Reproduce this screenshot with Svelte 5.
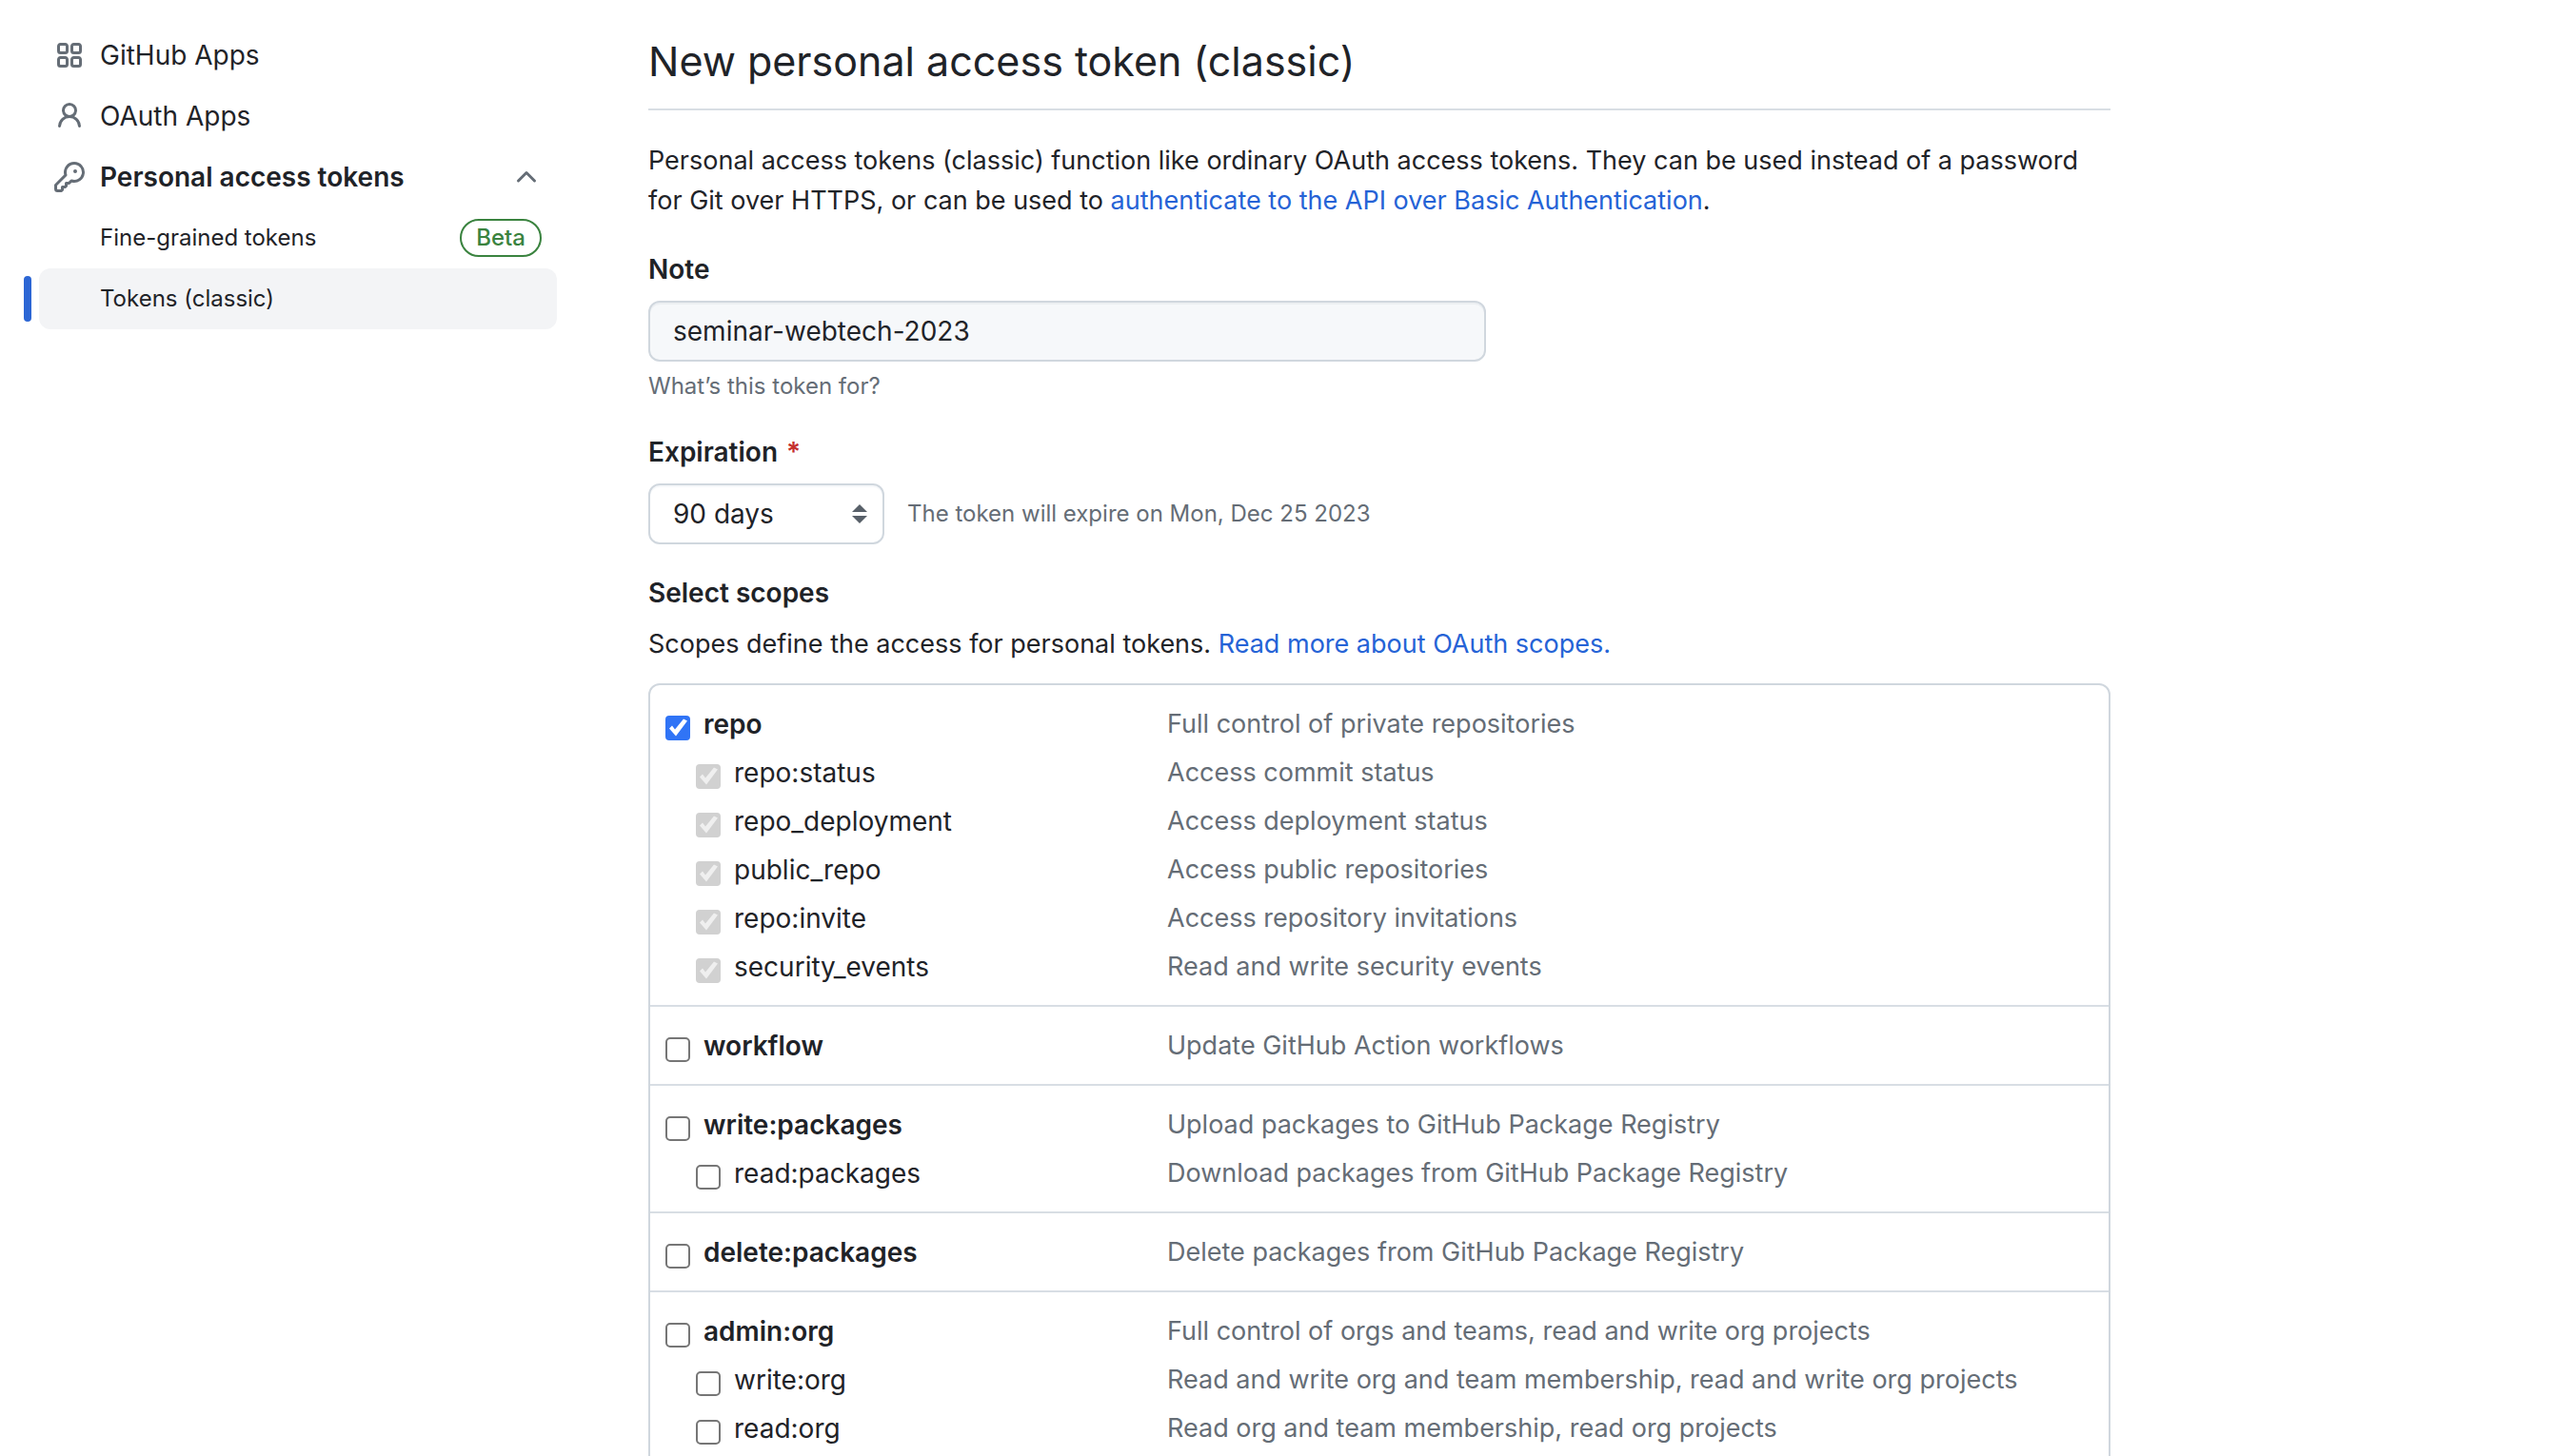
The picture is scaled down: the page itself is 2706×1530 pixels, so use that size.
<script>
  let note = $state('seminar-webtech-2023');
  let expiration = $state('90');

  const groups = $state([
    {
      name: 'repo', text: 'Full control of private repositories', checked: true,
      children: [
        { name: 'repo:status', text: 'Access commit status' },
        { name: 'repo_deployment', text: 'Access deployment status' },
        { name: 'public_repo', text: 'Access public repositories' },
        { name: 'repo:invite', text: 'Access repository invitations' },
        { name: 'security_events', text: 'Read and write security events' }
      ]
    },
    { name: 'workflow', text: 'Update GitHub Action workflows', checked: false, children: [] },
    {
      name: 'write:packages', text: 'Upload packages to GitHub Package Registry', checked: false,
      children: [{ name: 'read:packages', text: 'Download packages from GitHub Package Registry' }]
    },
    { name: 'delete:packages', text: 'Delete packages from GitHub Package Registry', checked: false, children: [] },
    {
      name: 'admin:org', text: 'Full control of orgs and teams, read and write org projects', checked: false,
      children: [
        { name: 'write:org', text: 'Read and write org and team membership, read and write org projects' },
        { name: 'read:org', text: 'Read org and team membership, read org projects' }
      ]
    }
  ]);
</script>

<div class="page">
  <nav class="sidebar" aria-label="Developer settings">
    <a class="item" href="#apps">
      <svg class="icon" viewBox="0 0 16 16" aria-hidden="true"><path d="M1.5 3.25c0-.966.784-1.75 1.75-1.75h2.5c.966 0 1.75.784 1.75 1.75v2.5A1.75 1.75 0 0 1 5.75 7.5h-2.5A1.75 1.75 0 0 1 1.5 5.75Zm7 0c0-.966.784-1.75 1.75-1.75h2.5c.966 0 1.75.784 1.75 1.75v2.5a1.75 1.75 0 0 1-1.75 1.75h-2.5A1.75 1.75 0 0 1 8.5 5.75Zm-7 7c0-.966.784-1.75 1.75-1.75h2.5c.966 0 1.75.784 1.75 1.75v2.5a1.75 1.75 0 0 1-1.75 1.75h-2.5a1.75 1.75 0 0 1-1.75-1.75Zm7 0c0-.966.784-1.75 1.75-1.75h2.5c.966 0 1.75.784 1.75 1.75v2.5a1.75 1.75 0 0 1-1.75 1.75h-2.5a1.75 1.75 0 0 1-1.75-1.75ZM3.25 3a.25.25 0 0 0-.25.25v2.5c0 .138.112.25.25.25h2.5A.25.25 0 0 0 6 5.75v-2.5A.25.25 0 0 0 5.75 3Zm7 0a.25.25 0 0 0-.25.25v2.5c0 .138.112.25.25.25h2.5a.25.25 0 0 0 .25-.25v-2.5a.25.25 0 0 0-.25-.25Zm-7 7a.25.25 0 0 0-.25.25v2.5c0 .138.112.25.25.25h2.5a.25.25 0 0 0 .25-.25v-2.5a.25.25 0 0 0-.25-.25Zm7 0a.25.25 0 0 0-.25.25v2.5c0 .138.112.25.25.25h2.5a.25.25 0 0 0 .25-.25v-2.5a.25.25 0 0 0-.25-.25Z" /></svg>
      <span>GitHub Apps</span>
    </a>
    <a class="item" href="#oauth">
      <svg class="icon" viewBox="0 0 16 16" aria-hidden="true"><path d="M10.561 8.073a6.005 6.005 0 0 1 3.432 5.142.75.75 0 1 1-1.498.07 4.5 4.5 0 0 0-8.99 0 .75.75 0 0 1-1.498-.07 6.004 6.004 0 0 1 3.431-5.142 3.999 3.999 0 1 1 5.123 0ZM10.5 5a2.5 2.5 0 1 0-5 0 2.5 2.5 0 0 0 5 0Z" /></svg>
      <span>OAuth Apps</span>
    </a>
    <button class="item strong" type="button" aria-expanded="true">
      <svg class="icon" viewBox="0 0 16 16" aria-hidden="true"><path d="M10.5 0a5.499 5.499 0 1 1-1.288 10.848l-.932.932a.749.749 0 0 1-.53.22H7v.75a.749.749 0 0 1-.22.53l-.5.5a.749.749 0 0 1-.53.22H5v.75a.749.749 0 0 1-.22.53l-.5.5a.749.749 0 0 1-.53.22h-2A1.75 1.75 0 0 1 0 14.25v-2c0-.199.079-.389.22-.53l4.932-4.932A5.5 5.5 0 0 1 10.5 0Zm-4 5.5c-.001.431.069.86.205 1.269a.75.75 0 0 1-.181.768L1.5 12.56v1.69c0 .138.112.25.25.25h1.69l.06-.06v-1.19a.75.75 0 0 1 .75-.75h1.19l.06-.06v-1.19a.75.75 0 0 1 .75-.75h1.19l1.023-1.025a.75.75 0 0 1 .768-.18A4 4 0 1 0 6.5 5.5ZM11 6a1 1 0 1 1 0-2 1 1 0 0 1 0 2Z" /></svg>
      <span class="grow">Personal access tokens</span>
      <svg class="icon" viewBox="0 0 16 16" aria-hidden="true"><path d="M3.22 10.53a.749.749 0 0 1 0-1.06l4.25-4.25a.749.749 0 0 1 1.06 0l4.25 4.25a.749.749 0 1 1-1.06 1.06L8 6.811 4.28 10.53a.749.749 0 0 1-1.06 0Z" /></svg>
    </button>
    <a class="item sub" href="#fine-grained">
      <span class="grow">Fine-grained tokens</span>
      <span class="beta">Beta</span>
    </a>
    <a class="item sub active" href="#classic" aria-current="page">Tokens (classic)</a>
  </nav>

  <main>
    <h1>New personal access token (classic)</h1>
    <p class="intro">
      Personal access tokens (classic) function like ordinary OAuth access tokens. They can be used instead of a password for Git over HTTPS, or can be used to <a href="#auth">authenticate to the API over Basic Authentication</a>.
    </p>

    <div class="field">
      <label class="heading" for="note">Note</label>
      <input id="note" class="text" type="text" bind:value={note} aria-describedby="note-help" />
      <p class="hint" id="note-help">What’s this token for?</p>
    </div>

    <div class="field">
      <label class="heading" for="expiration">Expiration <span class="required">*</span></label>
      <div class="expiry">
        <div class="select">
          <select id="expiration" bind:value={expiration}>
            <option value="7">7 days</option>
            <option value="30">30 days</option>
            <option value="60">60 days</option>
            <option value="90">90 days</option>
          </select>
          <svg class="arrows" viewBox="0 0 16 20" aria-hidden="true"><path d="M8 0l8 8H0zM8 20l8-8H0z" /></svg>
        </div>
        <p class="hint">The token will expire on Mon, Dec 25 2023</p>
      </div>
    </div>

    <h2 class="heading">Select scopes</h2>
    <p class="about">Scopes define the access for personal tokens. <a href="#scopes">Read more about OAuth scopes.</a></p>

    <ul class="scopes">
      {#each groups as group}
        <li class="group">
          <div class="row">
            <label class="name strong">
              <input type="checkbox" bind:checked={group.checked} />
              {group.name}
            </label>
            <span class="description">{group.text}</span>
          </div>
          {#each group.children as child}
            <div class="row">
              <label class="name child">
                <input type="checkbox" checked={group.checked} disabled={group.checked} />
                {child.name}
              </label>
              <span class="description">{child.text}</span>
            </div>
          {/each}
        </li>
      {/each}
    </ul>
  </main>
</div>

<style>
  :global(html) {
    scrollbar-width: none;
  }

  :global(body) {
    background: #fff;
  }

  .page {
    display: flex;
    align-items: flex-start;
    gap: 96px;
    padding: 26px 40px 0 41px;
    color: #1f2328;
    font-family: Inter, "Liberation Sans", sans-serif;
    font-size: 28px;
    line-height: 42px;
  }

  h1, h2, p, ul {
    margin: 0;
    padding: 0;
  }

  a {
    color: #2563d6;
    text-decoration: none;
  }

  .sidebar {
    flex: 0 0 544px;
    display: flex;
    flex-direction: column;
  }

  .item {
    display: flex;
    align-items: center;
    gap: 16px;
    height: 64px;
    padding: 0 16px;
    border: 0;
    border-radius: 12px;
    box-sizing: border-box;
    background: none;
    color: #1f2328;
    font: inherit;
    text-align: left;
  }

  .item.strong,
  .name.strong {
    font-weight: 600;
  }

  .icon {
    flex: none;
    width: 32px;
    height: 32px;
    fill: #656d76;
  }

  .grow {
    flex: 1;
  }

  .sub {
    padding-left: 64px;
    font-size: 24px;
  }

  .active {
    position: relative;
    background: #f3f4f6;
  }

  .active::before {
    content: "";
    position: absolute;
    left: -16px;
    top: 8px;
    bottom: 8px;
    width: 8px;
    border-radius: 4px;
    background: #2c66d4;
  }

  .beta {
    padding: 0 15px;
    border: 2px solid #3a833f;
    border-radius: 20px;
    color: #3a833f;
    font-weight: 500;
    line-height: 36px;
  }

  main {
    flex: 1;
    min-width: 0;
    max-width: 1536px;
  }

  h1 {
    padding-bottom: 12px;
    border-bottom: 2px solid #d8dee4;
    font-size: 43px;
    font-weight: 400;
    line-height: 76px;
  }

  .intro,
  .about,
  .description {
    font-size: 27px;
  }

  .intro {
    margin: 32px 0 30px;
  }

  .field {
    margin-bottom: 30px;
  }

  .heading {
    display: block;
    margin-bottom: 12px;
    font-size: 28px;
    font-weight: 600;
    line-height: 42px;
  }

  .required {
    margin-left: 2px;
    color: #c5302f;
  }

  .text,
  select {
    display: block;
    box-sizing: border-box;
    height: 64px;
    padding: 0 24px;
    border: 2px solid #d0d7de;
    border-radius: 12px;
    color: #1f2328;
    font: inherit;
  }

  .text {
    width: 100%;
    max-width: 880px;
    background: #f6f8fa;
    box-shadow: inset 0 2px 0 #eceff2;
  }

  .hint {
    color: #656d76;
    font-size: 24px;
    line-height: 36px;
  }

  .field > .hint {
    margin-top: 8px;
  }

  .expiry {
    display: flex;
    align-items: center;
    gap: 24px;
  }

  .select {
    position: relative;
  }

  select {
    width: 248px;
    appearance: none;
    background: #fff;
    box-shadow: inset 0 2px 0 #f6f8fa;
  }

  .arrows {
    position: absolute;
    right: 18px;
    top: 22px;
    width: 16px;
    height: 20px;
    fill: #586069;
    pointer-events: none;
  }

  .about {
    margin-bottom: 20px;
  }

  .scopes {
    border: 2px solid #d0d7de;
    border-radius: 12px;
    list-style: none;
  }

  .group {
    padding: 15px 16px;
  }

  .group + .group {
    border-top: 2px solid #d8dee4;
  }

  .row {
    display: flex;
    align-items: center;
    height: 51px;
  }

  .name {
    flex: 0 0 527px;
    display: flex;
    align-items: center;
    gap: 14px;
    box-sizing: border-box;
  }

  .child {
    padding-left: 32px;
  }

  .description {
    color: #656d76;
  }

  input[type="checkbox"] {
    flex: none;
    width: 26px;
    height: 26px;
    margin: 8px 0 0;
    border: 2px solid #767676;
    border-radius: 5px;
    box-sizing: border-box;
    appearance: none;
    background: #fff;
  }

  input[type="checkbox"]:checked {
    border: 0;
    border-radius: 4px;
    background: #3074f6;
  }

  input[type="checkbox"]:checked::before {
    content: "";
    display: block;
    width: 26px;
    height: 26px;
    background: #fff;
    clip-path: polygon(4px 14px, 7px 11px, 10px 15px, 19px 4px, 23px 6px, 11px 22px);
  }

  input[type="checkbox"]:checked:disabled {
    background: #d1d1d1;
  }

  input[type="checkbox"]:disabled::before {
    background: #efefef;
  }

  input[type="checkbox"]:checked:disabled::before {
    background: #efefef;
  }
</style>
